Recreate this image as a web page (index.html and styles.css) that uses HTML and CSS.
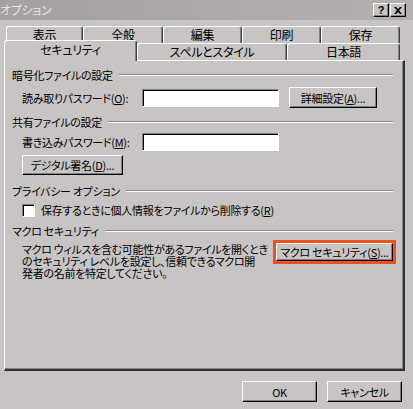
FILE: index.html
```html
<!DOCTYPE html>
<html lang="ja">
<head>
<meta charset="utf-8">
<link rel="stylesheet" href="styles.css">
</head>
<body>
<div class="titlebar">
  <span class="title">オプション</span>
  <div class="caps">
    <span class="cap q">?</span>
    <span class="cap"><svg width="8" height="7" viewBox="0 0 8 7"><path d="M0 0h2l2 2 2-2h2L5 3.5 8 7H6L4 5 2 7H0l3-3.5z" fill="#000"/></svg></span>
  </div>
</div>
<div class="tabs">
  <div class="row row1">
    <div class="tab w77">表示</div>
    <div class="tab w80">全般</div>
    <div class="tab w79">編集</div>
    <div class="tab w79">印刷</div>
    <div class="tab w79">保存</div>
  </div>
  <div class="row row2">
    <div class="tab sel w133">セキュリティ</div>
    <div class="tab w150">スペルとスタイル</div>
    <div class="tab w113">日本語</div>
  </div>
</div>
<div class="panel">
  <div class="ghead"><span>暗号化ファイルの設定</span><div class="gline"></div></div>
  <div class="frow r1">
    <span class="lbl">読み取りパスワード(<u>O</u>):</span>
    <div class="input"></div>
    <div class="btn adv">詳細設定(<u>A</u>)...</div>
  </div>
  <div class="ghead g2"><span>共有ファイルの設定</span><div class="gline"></div></div>
  <div class="frow r2">
    <span class="lbl">書き込みパスワード(<u>M</u>):</span>
    <div class="input"></div>
  </div>
  <div class="btn sig">デジタル署名(<u>D</u>)...</div>
  <div class="ghead g3"><span>プライバシー オプション</span><div class="gline"></div></div>
  <div class="chkrow">
    <div class="chk"></div>
    <span>保存するときに個人情報をファイルから削除する(<u>R</u>)</span>
  </div>
  <div class="ghead g4"><span>マクロ セキュリティ</span><div class="gline"></div></div>
  <div class="macro">
    <p class="desc">マクロ ウィルスを含む可能性があるファイルを開くとき<br>のセキュリティ レベルを設定し、信頼できるマクロ開<br>発者の名前を特定してください。</p>
    <div class="hl"><div class="btn msec">マクロ セキュリティ(<u>S</u>)...</div></div>
  </div>
</div>
<div class="footer">
  <div class="btn fbtn">OK</div>
  <div class="btn fbtn">キャンセル</div>
</div>
</body>
</html>
```

FILE: styles.css
```css
html, body {
  margin: 0;
  padding: 0;
}
body {
  background: #c8c4c4;
  font-family: "Noto Sans CJK JP", "Liberation Sans", sans-serif;
  font-size: 11px;
  letter-spacing: -0.3px;
  color: #000;
  width: 413px;
  height: 409px;
  overflow: hidden;
  font-feature-settings: "palt";
  white-space: nowrap;
}
u { text-decoration: underline; text-underline-offset: 1px; }

.titlebar {
  height: 20px;
  background: linear-gradient(to right, #a4a0a0, #b4b0b0);
  display: flex;
  align-items: center;
  justify-content: space-between;
  padding-right: 7px;
  box-sizing: border-box;
}
.title {
  color: #e4e2e2;
  margin-left: 0;
  line-height: 20px;
  font-size: 12px;
}
.caps { display: flex; gap: 1px; }
.cap {
  width: 16px;
  height: 14px;
  box-sizing: border-box;
  background: #c8c4c4;
  border: 1px solid;
  border-color: #fff #000 #000 #fff;
  box-shadow: inset -1px -1px #808080;
  display: flex;
  align-items: center;
  justify-content: center;
}
.cap.q { font: bold 11px "Liberation Sans", sans-serif; line-height: 12px; }

.tabs { padding-top: 6px; }
.row { display: flex; height: 17px; }
.row1 { margin-left: 6px; }
.row2 { margin-left: 4px; align-items: flex-end; }
.tab {
  box-sizing: border-box;
  height: 17px;
  border: 1px solid;
  border-color: #fff #404040 transparent #fff;
  border-bottom: none;
  border-radius: 3px 3px 0 0;
  box-shadow: inset -1px 0 #808080;
  text-align: center;
  line-height: 16px;
  background: #c8c4c4;
  font-size: 12px;
}
.tab.sel {
  height: 21px;
  margin-bottom: -1px;
  position: relative;
  z-index: 1;
  line-height: 18px;
}
.w77 { width: 77px; }
.w79 { width: 79px; }
.w80 { width: 80px; }
.w113 { width: 113px; }
.w133 { width: 133px; }
.w150 { width: 150px; }

.panel {
  box-sizing: border-box;
  width: 401px;
  height: 311px;
  margin-left: 4px;
  border-style: solid;
  border-width: 1px 2px 2px 1px;
  border-color: #fff #303030 #303030 #fff;
  box-shadow: inset -1px -1px #808080;
  padding: 7px 10px 0 7px;
}
.ghead {
  display: flex;
  align-items: center;
  height: 14px;
  line-height: 14px;
}
.gline {
  flex: 1;
  height: 0;
  border-top: 1px solid #8c8888;
  border-bottom: 1px solid #fff;
  margin-left: 6px;
}
.g2 { margin-top: 7px; }
.g3 { margin-top: 9px; }
.g4 { margin-top: 7px; }

.frow {
  display: flex;
  align-items: center;
  padding-left: 10px;
}
.r1 { margin-top: 5px; height: 21px; }
.r2 { margin-top: 4px; height: 18px; }
.lbl { width: 120px; }
.input {
  box-sizing: border-box;
  width: 137px;
  height: 18px;
  background: #fff;
  border: 1px solid;
  border-color: #808080 #fff #fff #808080;
  box-shadow: inset 1px 1px #000;
}
.btn {
  box-sizing: border-box;
  border: 1px solid;
  border-color: #fff #000 #000 #fff;
  box-shadow: inset -1px -1px #808080;
  background: #c8c4c4;
  display: flex;
  align-items: center;
  justify-content: center;
}
.adv { width: 88px; height: 21px; margin-left: 10px; }
.sig { width: 101px; height: 20px; margin: 4px 0 0 10px; }

.chkrow {
  display: flex;
  align-items: center;
  gap: 6px;
  margin-top: 5px;
  padding-left: 10px;
  height: 14px;
}
.chk {
  box-sizing: border-box;
  width: 13px;
  height: 13px;
  background: #fff;
  border: 1px solid;
  border-color: #808080 #fff #fff #808080;
  box-shadow: inset 1px 1px #000;
}

.macro {
  display: flex;
  align-items: flex-start;
  margin-top: 2px;
  margin-right: -3px;
}
.desc {
  margin: 0;
  padding: 3px 0 0 10px;
  line-height: 12px;
}
.hl {
  margin-left: auto;
  border: 3px solid #f0501e;
  width: 123px;
  height: 24px;
  box-sizing: border-box;
}
.msec { width: 117px; height: 18px; }

.footer {
  display: flex;
  justify-content: flex-end;
  gap: 10px;
  padding-right: 11px;
  margin-top: 10px;
}
.fbtn { width: 75px; height: 21px; }
```
